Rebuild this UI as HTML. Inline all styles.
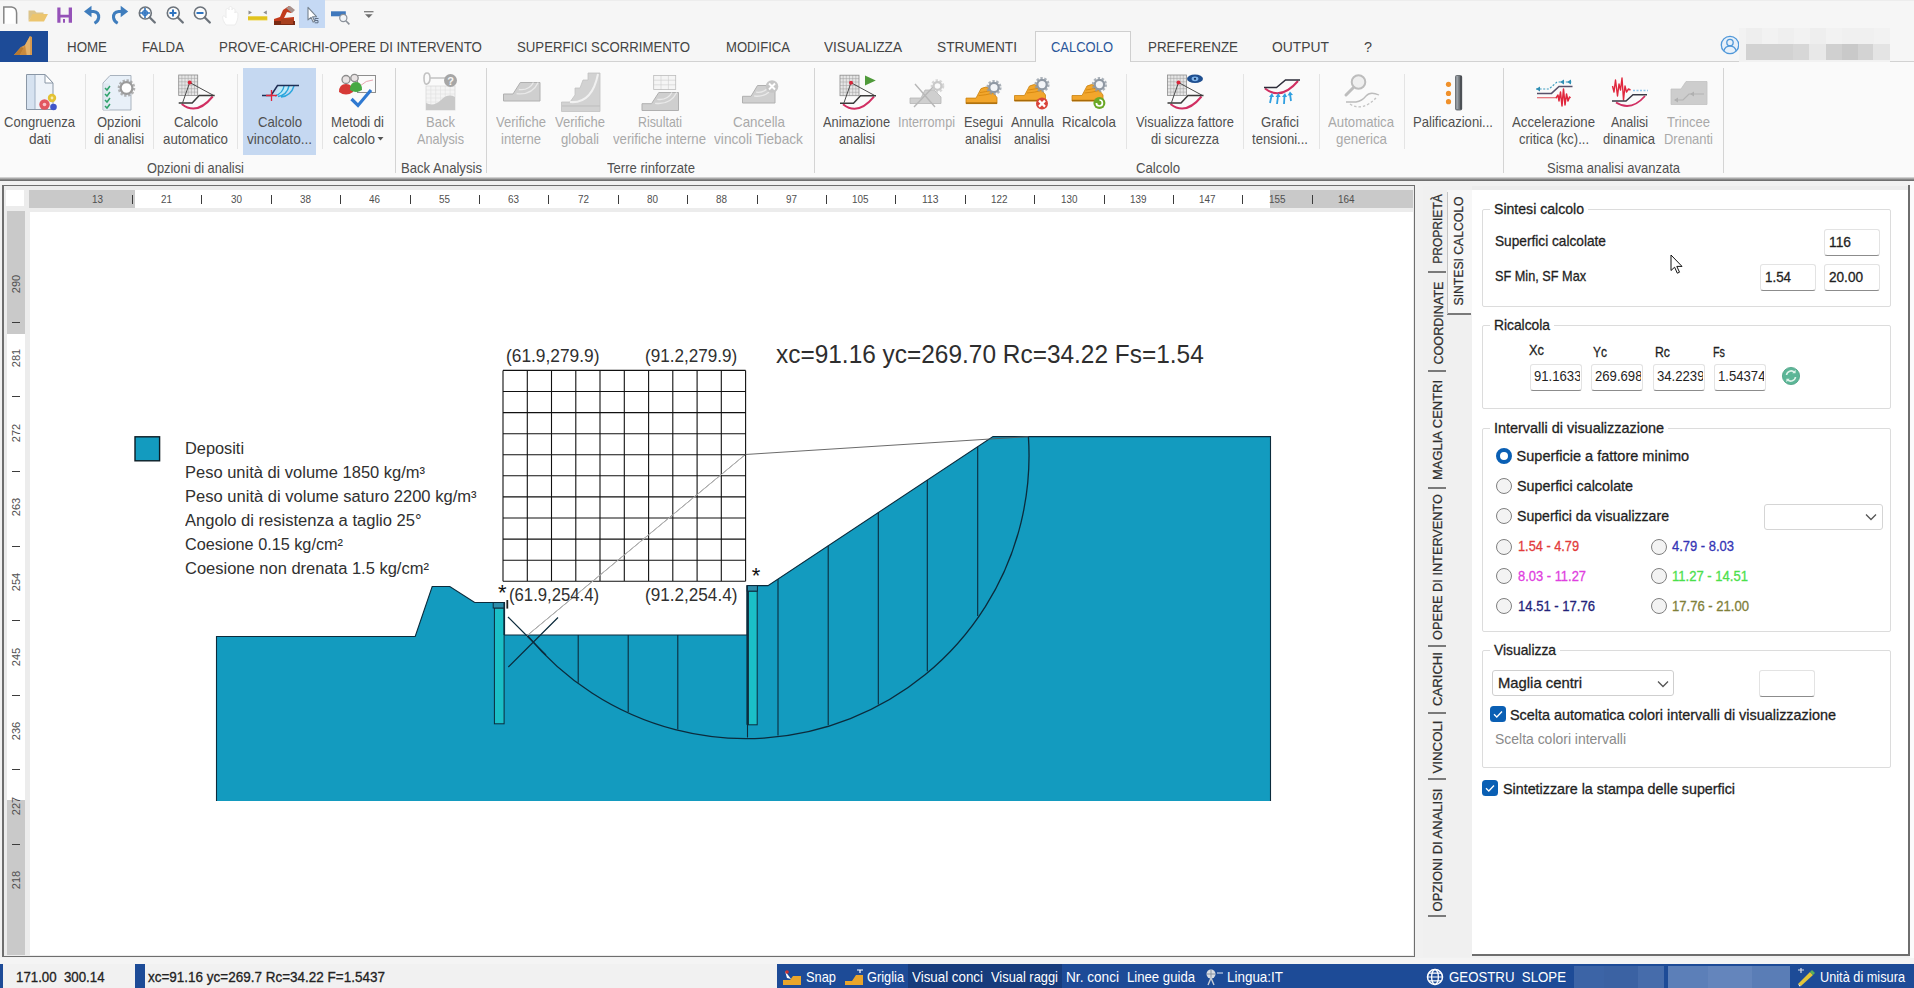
<!DOCTYPE html>
<html lang="it"><head><meta charset="utf-8"><title>GEOSTRU SLOPE</title>
<style>
*{box-sizing:border-box;margin:0;padding:0}
html,body{width:1914px;height:988px;overflow:hidden;background:#f1f1f1;font-family:"Liberation Sans",sans-serif}
.a{position:absolute}
.t{position:absolute;white-space:pre;transform-origin:0 50%}
</style></head>
<body>
<div class="a" style="left:0px;top:0px;width:1914px;height:31px;background:#f6f6f6;"></div>
<div class="a" style="left:0px;top:0px;width:1914px;height:1px;background:#ededed;"></div>
<svg class="a" style="left:2px;top:4px" width="18" height="22" viewBox="0 0 18 22"><path d="M1.800 19.700V3H9.500Q14.600 3.500 14.600 9V19.700" fill="#fff" stroke="#858585" stroke-width="1.500"/></svg>
<svg class="a" style="left:27px;top:8px" width="22" height="16" viewBox="0 0 22 16"><path d="M1.500 13V2.500h6l2 2h7v2.500H6z" fill="#dcc48a"/><path d="M1.500 13.500L5.500 6h15.500l-4 7.500z" fill="#ecc56e"/></svg>
<svg class="a" style="left:56px;top:7px" width="18" height="17" viewBox="0 0 18 17"><path d="M1.300 .500h3.200v7.300h8.200V.500h3.300v15.200H1.300z" fill="#9552b8"/><rect x="4.500" y="10.500" width="8.200" height="5.500" fill="#f6f6f6"/><rect x="7" y="12" width="2" height="3.700" fill="#9552b8"/></svg>
<svg class="a" style="left:83px;top:4px" width="20" height="22" viewBox="0 0 20 22"><path d="M1 7.500L8.500 1.800V13.200z" fill="#3f7dbd"/><path d="M7.500 7.500H10.500Q16 8.200 15.700 13.500Q15.300 17.200 11.500 19.300" fill="none" stroke="#3f7dbd" stroke-width="3"/></svg>
<svg class="a" style="left:110px;top:4px" width="20" height="22" viewBox="0 0 20 22"><path d="M18.200 7.500L10.700 1.800V13.200z" fill="#3f7dbd"/><path d="M11.700 7.500H8.700Q3.200 8.200 3.500 13.500Q3.900 17.200 7.700 19.300" fill="none" stroke="#3f7dbd" stroke-width="3"/></svg>
<svg class="a" style="left:137px;top:5px" width="20" height="20" viewBox="0 0 20 20"><circle cx="8.300" cy="8" r="6" fill="#fbfbfb" stroke="#6c737b" stroke-width="1.600"/><path d="M12.800 12.500L17.800 17.500" stroke="#6c737b" stroke-width="2.300" stroke-linecap="round"/><path d="M8 3v10M3 8h10" stroke="#2f74c0" stroke-width="1.6"/><circle cx="8" cy="8" r="2.4" fill="none" stroke="#2f74c0" stroke-width="1.2"/></svg>
<svg class="a" style="left:165px;top:5px" width="20" height="20" viewBox="0 0 20 20"><circle cx="8.300" cy="8" r="6" fill="#fbfbfb" stroke="#6c737b" stroke-width="1.600"/><path d="M12.800 12.500L17.800 17.500" stroke="#6c737b" stroke-width="2.300" stroke-linecap="round"/><path d="M8 4.5v7M4.5 8h7" stroke="#2f74c0" stroke-width="2"/></svg>
<svg class="a" style="left:192px;top:5px" width="20" height="20" viewBox="0 0 20 20"><circle cx="8.300" cy="8" r="6" fill="#fbfbfb" stroke="#6c737b" stroke-width="1.600"/><path d="M12.800 12.500L17.800 17.500" stroke="#6c737b" stroke-width="2.300" stroke-linecap="round"/><path d="M4.5 8h7" stroke="#2f74c0" stroke-width="2"/></svg>
<svg class="a" style="left:221px;top:5px" width="20" height="22" viewBox="0 0 20 22"><path d="M5 20c-3-4-4-8-3-9s3 1 3 2V5c0-2 3-2 3 0V3c0-2 3-2 3 0v2c0-2 3-2 3 0v3c0-2 3-1 3 1 0 5-1 8-3 11z" fill="#fff" stroke="#ececec" stroke-width="1"/></svg>
<svg class="a" style="left:246px;top:8px" width="24" height="14" viewBox="0 0 24 14"><rect x="2" y="8.300" width="19.300" height="3.800" fill="#e2c31c"/><path d="M2 12.300h19.300" stroke="#f3e38a" stroke-width=".8"/><path d="M2.500 2.500l3.500 2-3.500 2zM20.800 2.500l-3.500 2 3.500 2z" fill="#8d8d8d"/></svg>
<svg class="a" style="left:273px;top:5px" width="24" height="21" viewBox="0 0 24 21"><path d="M1 20v-6l6-2 3-7 6-4 5 4-3 3-4-1-3 6 10-1v6z" fill="#c23a1c"/><path d="M1 20v-4h21v4z" fill="#7a2a14"/><path d="M13 3l4-2 5 4-3 3z" fill="#a8928c"/><path d="M8 14h12v5H8z" fill="#a8401f"/></svg>
<div class="a" style="left:299px;top:0px;width:26px;height:28px;background:#c5d9f4;"></div>
<svg class="a" style="left:305px;top:5px" width="16" height="21" viewBox="0 0 16 21"><path d="M3 2.300v12.600l3-2.600 2.100 4.800 1.600-.7-2.100-4.700H11.500z" fill="#fff" stroke="#76828f" stroke-width="1.100" stroke-linejoin="round"/><path d="M10 13.500h3.500M10 13.500v2h3v2.300h-3.300" fill="none" stroke="#5f6f85" stroke-width="1"/></svg>
<svg class="a" style="left:330px;top:8px" width="22" height="18" viewBox="0 0 22 18"><rect x="1" y="3.300" width="14.800" height="5" fill="#3f78bd"/><circle cx="13.300" cy="10" r="3.600" fill="#f2f5f8" stroke="#8a9099" stroke-width="1.200"/><path d="M15.800 12.800l3.600 3.600" stroke="#8a9099" stroke-width="1.600"/></svg>
<svg class="a" style="left:361px;top:9px" width="14" height="12" viewBox="0 0 14 12"><path d="M3 2.700h9.500" stroke="#7a7a7a" stroke-width="1.300"/><path d="M4 5.200h7.600L7.800 9z" fill="#6e6e6e"/></svg>
<div class="a" style="left:0px;top:31px;width:1914px;height:31px;background:#f6f6f6;"></div>
<div class="a" style="left:0px;top:61px;width:1914px;height:1px;background:#d2d2d2;"></div>
<div class="a" style="left:0px;top:31px;width:48px;height:31px;background:#1d4b97;"></div>
<svg class="a" style="left:12px;top:35px" width="23" height="22" viewBox="0 0 23 22"><path d="M2 20L9 12l4-2 5-9 2 1v18z" fill="#d89a4e"/><path d="M2 20l7-8 3 1-4 7z" fill="#b87a32"/><path d="M13 10l5-9v19h-3z" fill="#e7b873" opacity=".8"/><path d="M8 20l5-10 1 10z" fill="#c98a3e"/></svg>
<div class="a" style="left:1035px;top:31px;width:96px;height:31px;background:#fafafa;border:1px solid #cfcfcf;border-bottom:none;"></div>
<div class="t" style="left:67.0px;top:37.0px;font-size:15.5px;line-height:20px;color:#444;transform:scaleX(0.860);">HOME</div>
<div class="t" style="left:142.0px;top:37.0px;font-size:15.5px;line-height:20px;color:#444;transform:scaleX(0.855);">FALDA</div>
<div class="t" style="left:219.0px;top:37.0px;font-size:15.5px;line-height:20px;color:#444;transform:scaleX(0.859);">PROVE-CARICHI-OPERE DI INTERVENTO</div>
<div class="t" style="left:517.0px;top:37.0px;font-size:15.5px;line-height:20px;color:#444;transform:scaleX(0.852);">SUPERFICI SCORRIMENTO</div>
<div class="t" style="left:726.0px;top:37.0px;font-size:15.5px;line-height:20px;color:#444;transform:scaleX(0.845);">MODIFICA</div>
<div class="t" style="left:824.0px;top:37.0px;font-size:15.5px;line-height:20px;color:#444;transform:scaleX(0.879);">VISUALIZZA</div>
<div class="t" style="left:937.0px;top:37.0px;font-size:15.5px;line-height:20px;color:#444;transform:scaleX(0.885);">STRUMENTI</div>
<div class="t" style="left:1051.0px;top:37.0px;font-size:15.5px;line-height:20px;color:#2b579a;transform:scaleX(0.837);">CALCOLO</div>
<div class="t" style="left:1148.0px;top:37.0px;font-size:15.5px;line-height:20px;color:#444;transform:scaleX(0.864);">PREFERENZE</div>
<div class="t" style="left:1272.0px;top:37.0px;font-size:15.5px;line-height:20px;color:#444;transform:scaleX(0.895);">OUTPUT</div>
<div class="t" style="left:1364.0px;top:37.0px;font-size:15.5px;line-height:20px;color:#444;transform:scaleX(0.928);">?</div>
<svg class="a" style="left:1718.6px;top:34.2px" width="22" height="22" viewBox="0 0 22 22"><circle cx="11" cy="11" r="9.500" fill="#e7f0f9"/><circle cx="11" cy="11" r="8.700" fill="none" stroke="#4f97d8" stroke-width="1.300"/><circle cx="11" cy="8.500" r="3.200" fill="none" stroke="#4f97d8" stroke-width="1.300"/><path d="M4.800 17c1-3.800 3.500-4.800 6.200-4.800s5.200 1 6.200 4.800" fill="none" stroke="#4f97d8" stroke-width="1.300"/></svg>
<div class="a" style="left:1739px;top:28px;width:151px;height:34px;background:#f2f2f2;"></div>
<div class="a" style="left:1746px;top:28px;width:16px;height:16px;background:#eeeeee;"></div>
<div class="a" style="left:1778px;top:28px;width:16px;height:16px;background:#efefef;"></div>
<div class="a" style="left:1810px;top:28px;width:16px;height:16px;background:#eeeeee;"></div>
<div class="a" style="left:1842px;top:28px;width:32px;height:16px;background:#f0f0f0;"></div>
<div class="a" style="left:1746px;top:44px;width:47px;height:16px;background:#d2d2d2;"></div>
<div class="a" style="left:1793px;top:44px;width:16px;height:16px;background:#d7d7d7;"></div>
<div class="a" style="left:1809px;top:44px;width:17px;height:16px;background:#e8e8e8;"></div>
<div class="a" style="left:1826px;top:44px;width:16px;height:16px;background:#d0d0d0;"></div>
<div class="a" style="left:1842px;top:44px;width:16px;height:16px;background:#c9c9c9;"></div>
<div class="a" style="left:1858px;top:44px;width:15px;height:16px;background:#d3d3d3;"></div>
<div class="a" style="left:1873px;top:44px;width:17px;height:16px;background:#e4e4e4;"></div>
<div class="a" style="left:0px;top:62px;width:1914px;height:118px;background:#fafafa;"></div>
<div class="a" style="left:0px;top:177px;width:1914px;height:4px;background:linear-gradient(#e4e4e4,#b4b4b4 30%,#7c7c7c 70%,#666);"></div>
<div class="a" style="left:0px;top:181px;width:1914px;height:4px;background:#f1f1f1;"></div>
<div class="a" style="left:243px;top:68px;width:73px;height:87px;background:#c5d8f1;"></div>
<div class="a" style="left:85px;top:74px;width:1px;height:75px;background:#e4e4e4;"></div>
<div class="a" style="left:153px;top:74px;width:1px;height:75px;background:#e4e4e4;"></div>
<div class="a" style="left:237px;top:74px;width:1px;height:75px;background:#e4e4e4;"></div>
<div class="a" style="left:322px;top:74px;width:1px;height:75px;background:#e4e4e4;"></div>
<div class="a" style="left:1126px;top:74px;width:1px;height:75px;background:#e4e4e4;"></div>
<div class="a" style="left:1243px;top:74px;width:1px;height:75px;background:#e4e4e4;"></div>
<div class="a" style="left:1319px;top:74px;width:1px;height:75px;background:#e4e4e4;"></div>
<div class="a" style="left:1404px;top:74px;width:1px;height:75px;background:#e4e4e4;"></div>
<div class="a" style="left:395px;top:68px;width:1px;height:105px;background:#d4d4d4;"></div>
<div class="a" style="left:486px;top:68px;width:1px;height:105px;background:#d4d4d4;"></div>
<div class="a" style="left:814px;top:68px;width:1px;height:105px;background:#d4d4d4;"></div>
<div class="a" style="left:1503px;top:68px;width:1px;height:105px;background:#d4d4d4;"></div>
<div class="a" style="left:1723px;top:68px;width:1px;height:105px;background:#d4d4d4;"></div>
<div class="t" style="left:4.0px;top:112.2px;font-size:15px;line-height:20px;color:#505050;transform:scaleX(0.869);">Congruenza</div>
<div class="t" style="left:28.5px;top:128.7px;font-size:15px;line-height:20px;color:#505050;transform:scaleX(0.910);">dati</div>
<div class="t" style="left:97.0px;top:112.2px;font-size:15px;line-height:20px;color:#505050;transform:scaleX(0.865);">Opzioni</div>
<div class="t" style="left:94.0px;top:128.7px;font-size:15px;line-height:20px;color:#505050;transform:scaleX(0.857);">di analisi</div>
<div class="t" style="left:173.5px;top:112.2px;font-size:15px;line-height:20px;color:#505050;transform:scaleX(0.880);">Calcolo</div>
<div class="t" style="left:163.0px;top:128.7px;font-size:15px;line-height:20px;color:#505050;transform:scaleX(0.886);">automatico</div>
<div class="t" style="left:257.5px;top:112.2px;font-size:15px;line-height:20px;color:#505050;transform:scaleX(0.880);">Calcolo</div>
<div class="t" style="left:247.0px;top:128.7px;font-size:15px;line-height:20px;color:#505050;transform:scaleX(0.907);">vincolato...</div>
<div class="t" style="left:331.0px;top:112.2px;font-size:15px;line-height:20px;color:#505050;transform:scaleX(0.871);">Metodi di</div>
<div class="t" style="left:332.5px;top:128.7px;font-size:15px;line-height:20px;color:#505050;transform:scaleX(0.900);">calcolo</div>
<div class="t" style="left:426.0px;top:112.2px;font-size:15px;line-height:20px;color:#a9a9a9;transform:scaleX(0.870);">Back</div>
<div class="t" style="left:417.0px;top:128.7px;font-size:15px;line-height:20px;color:#a9a9a9;transform:scaleX(0.841);">Analysis</div>
<div class="t" style="left:496.0px;top:112.2px;font-size:15px;line-height:20px;color:#a9a9a9;transform:scaleX(0.869);">Verifiche</div>
<div class="t" style="left:501.0px;top:128.7px;font-size:15px;line-height:20px;color:#a9a9a9;transform:scaleX(0.872);">interne</div>
<div class="t" style="left:555.0px;top:112.2px;font-size:15px;line-height:20px;color:#a9a9a9;transform:scaleX(0.869);">Verifiche</div>
<div class="t" style="left:561.0px;top:128.7px;font-size:15px;line-height:20px;color:#a9a9a9;transform:scaleX(0.876);">globali</div>
<div class="t" style="left:637.5px;top:112.2px;font-size:15px;line-height:20px;color:#a9a9a9;transform:scaleX(0.825);">Risultati</div>
<div class="t" style="left:613.0px;top:128.7px;font-size:15px;line-height:20px;color:#a9a9a9;transform:scaleX(0.878);">verifiche interne</div>
<div class="t" style="left:732.5px;top:112.2px;font-size:15px;line-height:20px;color:#a9a9a9;transform:scaleX(0.891);">Cancella</div>
<div class="t" style="left:714.0px;top:128.7px;font-size:15px;line-height:20px;color:#a9a9a9;transform:scaleX(0.912);">vincoli Tieback</div>
<div class="t" style="left:823.0px;top:112.2px;font-size:15px;line-height:20px;color:#505050;transform:scaleX(0.855);">Animazione</div>
<div class="t" style="left:838.5px;top:128.7px;font-size:15px;line-height:20px;color:#505050;transform:scaleX(0.847);">analisi</div>
<div class="t" style="left:898.0px;top:112.2px;font-size:15px;line-height:20px;color:#a9a9a9;transform:scaleX(0.844);">Interrompi</div>
<div class="t" style="left:963.5px;top:112.2px;font-size:15px;line-height:20px;color:#505050;transform:scaleX(0.850);">Esegui</div>
<div class="t" style="left:965.0px;top:128.7px;font-size:15px;line-height:20px;color:#505050;transform:scaleX(0.847);">analisi</div>
<div class="t" style="left:1010.5px;top:112.2px;font-size:15px;line-height:20px;color:#505050;transform:scaleX(0.859);">Annulla</div>
<div class="t" style="left:1014.0px;top:128.7px;font-size:15px;line-height:20px;color:#505050;transform:scaleX(0.847);">analisi</div>
<div class="t" style="left:1062.0px;top:112.2px;font-size:15px;line-height:20px;color:#505050;transform:scaleX(0.887);">Ricalcola</div>
<div class="t" style="left:1135.5px;top:112.2px;font-size:15px;line-height:20px;color:#505050;transform:scaleX(0.860);">Visualizza fattore</div>
<div class="t" style="left:1150.5px;top:128.7px;font-size:15px;line-height:20px;color:#505050;transform:scaleX(0.859);">di sicurezza</div>
<div class="t" style="left:1261.0px;top:112.2px;font-size:15px;line-height:20px;color:#505050;transform:scaleX(0.877);">Grafici</div>
<div class="t" style="left:1252.0px;top:128.7px;font-size:15px;line-height:20px;color:#505050;transform:scaleX(0.872);">tensioni...</div>
<div class="t" style="left:1328.0px;top:112.2px;font-size:15px;line-height:20px;color:#a9a9a9;transform:scaleX(0.880);">Automatica</div>
<div class="t" style="left:1335.5px;top:128.7px;font-size:15px;line-height:20px;color:#a9a9a9;transform:scaleX(0.886);">generica</div>
<div class="t" style="left:1413.0px;top:112.2px;font-size:15px;line-height:20px;color:#505050;transform:scaleX(0.872);">Palificazioni...</div>
<div class="t" style="left:1512.0px;top:112.2px;font-size:15px;line-height:20px;color:#505050;transform:scaleX(0.881);">Accelerazione</div>
<div class="t" style="left:1518.5px;top:128.7px;font-size:15px;line-height:20px;color:#505050;transform:scaleX(0.866);">critica (kc)...</div>
<div class="t" style="left:1610.5px;top:112.2px;font-size:15px;line-height:20px;color:#505050;transform:scaleX(0.837);">Analisi</div>
<div class="t" style="left:1603.0px;top:128.7px;font-size:15px;line-height:20px;color:#505050;transform:scaleX(0.866);">dinamica</div>
<div class="t" style="left:1667.0px;top:112.2px;font-size:15px;line-height:20px;color:#a9a9a9;transform:scaleX(0.869);">Trincee</div>
<div class="t" style="left:1664.0px;top:128.7px;font-size:15px;line-height:20px;color:#a9a9a9;transform:scaleX(0.864);">Drenanti</div>
<svg class="a" style="left:377px;top:136px" width="8" height="6"><path d="M0.5 1h6L3.5 4.5z" fill="#555"/></svg>
<div class="t" style="left:147.0px;top:157.6px;font-size:15px;line-height:20px;color:#505050;transform:scaleX(0.855);">Opzioni di analisi</div>
<div class="t" style="left:401.0px;top:157.6px;font-size:15px;line-height:20px;color:#505050;transform:scaleX(0.875);">Back Analysis</div>
<div class="t" style="left:607.0px;top:157.6px;font-size:15px;line-height:20px;color:#505050;transform:scaleX(0.872);">Terre rinforzate</div>
<div class="t" style="left:1136.0px;top:157.6px;font-size:15px;line-height:20px;color:#505050;transform:scaleX(0.880);">Calcolo</div>
<div class="t" style="left:1547.0px;top:157.6px;font-size:15px;line-height:20px;color:#505050;transform:scaleX(0.867);">Sisma analisi avanzata</div>
<svg class="a" style="left:0;top:62px" width="1914" height="118" viewBox="0 62 1914 118">
<path d="M26.5 74.5H45L53 83V109.5H26.5z" fill="#eef3f9" stroke="#8a97a6" stroke-width="1"/><path d="M27 75H35V109H27z" fill="#d6e2f0"/><path d="M35 75V109" stroke="#9fb0c4" stroke-width="1"/><path d="M45 74.5V83H53z" fill="#fff" stroke="#8a97a6" stroke-width="1"/><circle cx="44.5" cy="104.5" r="5.2" fill="#e2575f"/><circle cx="44.5" cy="104.5" r="1.8" fill="#f7c5c8"/><circle cx="52" cy="98" r="4.2" fill="#e3c233"/><circle cx="52" cy="98" r="1.4" fill="#f7ecb0"/><circle cx="53.5" cy="107" r="3.3" fill="#3f55c9"/>
<path d="M110 75.5H131V110H103V83z" fill="#e8f0f8" stroke="#a9b3be" stroke-width="1"/><path d="M103.5 83.5H109.5V110H103.5z" fill="#dfe8f1"/><path d="M105 88l2 2 3-4M105 94l2 2 3-4M105 100l2 2 3-4M105 106l2 2 3-4" stroke="#2fa36b" stroke-width="1.5" fill="none"/>
<circle cx="126.5" cy="88" r="7.5" fill="none" stroke="#9b9b9b" stroke-width="2.6" stroke-dasharray="2.3 1.6" opacity=".75"/><circle cx="126.5" cy="88" r="5.9" fill="#ffffff" stroke="#9b9b9b" stroke-width="2.2"/>
<rect x="178.7" y="75" width="19.0" height="20.5" fill="#e6e6e6" stroke="#8c8c8c" stroke-width=".8"/><path d="M181.9 75V95.5M178.7 78.4H197.7M185.0 75V95.5M178.7 81.8H197.7M188.2 75V95.5M178.7 85.2H197.7M191.4 75V95.5M178.7 88.7H197.7M194.5 75V95.5M178.7 92.1H197.7" stroke="#8c8c8c" stroke-width=".5" opacity=".8"/><path d="M189.7 82.5L182.7 102.5M189.7 82.5L213.7 95.5" stroke="#4a4a4a" stroke-width="1" fill="none"/><path d="M181.7 104Q196.7 116 212.7 96.5" stroke="#d12f62" stroke-width="2" fill="none"/><path d="M178.7 103H192.2L199.2 95.5H214.7" stroke="#3a3a3a" stroke-width="1.5" fill="none"/><circle cx="189.7" cy="82.5" r="2" fill="#d9263a"/>
<path d="M279 86Q278 94 272 96Q282 98 294 86z" fill="#bfe9f7"/><path d="M284 86Q283 93 275 96M289 86Q287 95 278 96.5M294 86Q291 96 281 97" stroke="#2aa6dd" stroke-width="1.4" fill="none"/><path d="M262 95.5H271L277.5 85.5H299" stroke="#1f2f55" stroke-width="1.5" fill="none"/><path d="M271.5 90V101M266 95.5H277" stroke="#e0263c" stroke-width="1.3"/>
<rect x="357.5" y="75.5" width="18" height="17" fill="#fbfbfb" stroke="#8e8e8e" stroke-width="1"/><path d="M360 86Q366 80 373 80" stroke="#e7a7b2" stroke-width="1" fill="none"/><circle cx="346" cy="79.5" r="4" fill="#e8e3e3" stroke="#8c8c8c" stroke-width="1.3"/><circle cx="354.5" cy="78" r="3.7" fill="#e8e3e3" stroke="#8c8c8c" stroke-width="1.3"/><path d="M339 92Q339 84 346 84Q353 84 353 92Q346 97 339 92z" fill="#d63a36"/><path d="M350 90Q350 82 356 82Q362 82 362 90Q356 94 350 90z" fill="#46a944"/><path d="M351.5 99L358 105.5L371 90" stroke="#2f79d1" stroke-width="3.2" fill="none"/>
<rect x="426" y="86" width="29" height="24" fill="#f4f4f4" stroke="#d9d9d9" stroke-width=".8"/><path d="M430.8 86V110M426 90.0H455M435.7 86V110M426 94.0H455M440.5 86V110M426 98.0H455M445.3 86V110M426 102.0H455M450.2 86V110M426 106.0H455" stroke="#d9d9d9" stroke-width=".5" opacity=".8"/>
<path d="M426 110V103Q434 107 441 100T455 97V110z" fill="#c9c9c9"/><path d="M424 78Q424 73 427 73T430 78T427 84T424 78zM430 78H446" stroke="#c2c2c2" stroke-width="1.6" fill="none"/><circle cx="450.500" cy="80.500" r="6.500" fill="#a6a6a6"/><text x="450.500" y="84.500" text-anchor="middle" font-size="11" font-weight="700" fill="#f4f4f4" font-family="Liberation Sans,sans-serif">?</text>
<path d="M503.5 101V94.0H513.0L520.3 82.5H540.0V101z" fill="#cfcfcf" stroke="#b0b0b0" stroke-width="1"/><path d="M518.8 89.5Q529.0 90.8 533.4 82.5M516.6 93.6Q532.0 95.5 538.2 82.5" stroke="#e9e9e9" stroke-width="1.3" fill="none"/>
<path d="M561.5 111.5V102H570L575 95V88H580L583 80H588V73H600V111.5z" fill="#d2d2d2" stroke="#c2c2c2" stroke-width=".8"/><path d="M570 102Q592 104 598 74" stroke="#f1f1f1" stroke-width="2" fill="none"/><path d="M562 106H600" stroke="#bdbdbd" stroke-width="1"/>
<rect x="653.7" y="75.5" width="22.0" height="14.0" fill="#f5f5f5" stroke="#bcbcbc" stroke-width=".8"/><path d="M661.0 75.5V89.5M653.7 80.2H675.7M668.4 75.5V89.5M653.7 84.8H675.7" stroke="#bcbcbc" stroke-width=".5" opacity=".8"/>
<path d="M642 110.5V103.7H651.5L658.8 92.5H678.5V110.5z" fill="#cfcfcf" stroke="#b0b0b0" stroke-width="1"/><path d="M657.3 99.3Q667.5 100.6 671.9 92.5M655.1 103.3Q670.5 105.1 676.7 92.5" stroke="#e9e9e9" stroke-width="1.3" fill="none"/>
<path d="M742.5 103V96.3H751.0L757.5 85.5H775.0V103z" fill="#cfcfcf" stroke="#b0b0b0" stroke-width="1"/><path d="M756.1 92.2Q765.2 93.4 769.1 85.5M754.2 96.0Q767.9 97.8 773.4 85.5" stroke="#e9e9e9" stroke-width="1.3" fill="none"/>
<circle cx="772" cy="86.5" r="6.3" fill="#c6c6c6"/><path d="M769 83.5l6 6M775 83.5l-6 6" stroke="#fff" stroke-width="2"/>
<rect x="840" y="75.2" width="19" height="20.5" fill="#e6e6e6" stroke="#8c8c8c" stroke-width=".8"/><path d="M843.2 75.2V95.7M840 78.6H859M846.3 75.2V95.7M840 82.0H859M849.5 75.2V95.7M840 85.5H859M852.7 75.2V95.7M840 88.9H859M855.8 75.2V95.7M840 92.3H859" stroke="#8c8c8c" stroke-width=".5" opacity=".8"/><path d="M851 82.7L844 102.7M851 82.7L875 95.7" stroke="#4a4a4a" stroke-width="1" fill="none"/><path d="M843 104.2Q858 116.2 874 96.7" stroke="#d12f62" stroke-width="2" fill="none"/><path d="M840 103.2H853.5L860.5 95.7H876" stroke="#3a3a3a" stroke-width="1.5" fill="none"/><circle cx="851" cy="82.7" r="2" fill="#d9263a"/>
<path d="M865 75.5V85.5L875.8 80.5z" fill="#4f9a3a"/>
<path d="M910 103.5V98H921L925 90H934L941 97V103.5z" fill="#cfcfcf" stroke="#b5b5b5" stroke-width=".8"/><path d="M915 84L935 107M936 84L914 107" stroke="#b7b7b7" stroke-width="1.4"/>
<circle cx="937.5" cy="86" r="5.5" fill="none" stroke="#c9c9c9" stroke-width="2.6" stroke-dasharray="2.3 1.6" opacity=".75"/><circle cx="937.5" cy="86" r="3.9" fill="#fafafa" stroke="#c9c9c9" stroke-width="2.2"/>
<path d="M966 103.6V98.1H976L981 88.6Q986 85.6 990 88.6L997 97.6V103.6z" fill="#f2a62c" stroke="#c9820f" stroke-width=".8"/><path d="M966 103.1H997" stroke="#a86a08" stroke-width="1.4"/><path d="M980 92.6Q986 91.6 991 90.6M978.5 95.6Q986 95.1 993 93.1" stroke="#d98a12" stroke-width="1" fill="none"/>
<circle cx="994" cy="87.5" r="6.3" fill="none" stroke="#8f98a3" stroke-width="2.6" stroke-dasharray="2.3 1.6" opacity=".75"/><circle cx="994" cy="87.5" r="4.699999999999999" fill="#f2f4f7" stroke="#8f98a3" stroke-width="2.2"/>
<path d="M1014.5 101V95.5H1024.5L1029.5 86Q1034.5 83 1038.5 86L1045.5 95V101z" fill="#f2a62c" stroke="#c9820f" stroke-width=".8"/><path d="M1014.5 100.5H1045.5" stroke="#a86a08" stroke-width="1.4"/><path d="M1028.5 90Q1034.5 89 1039.5 88M1027.0 93Q1034.5 92.5 1041.5 90.5" stroke="#d98a12" stroke-width="1" fill="none"/>
<circle cx="1042" cy="84.6" r="6.3" fill="none" stroke="#8f98a3" stroke-width="2.6" stroke-dasharray="2.3 1.6" opacity=".75"/><circle cx="1042" cy="84.6" r="4.699999999999999" fill="#f2f4f7" stroke="#8f98a3" stroke-width="2.2"/>
<circle cx="1042" cy="103.6" r="6" fill="#d9453b"/><path d="M1039 100.6l6 6M1045 100.6l-6 6" stroke="#fff" stroke-width="2.2"/>
<path d="M1072 101V95.5H1082L1087 86Q1092 83 1096 86L1103 95V101z" fill="#f2a62c" stroke="#c9820f" stroke-width=".8"/><path d="M1072 100.5H1103" stroke="#a86a08" stroke-width="1.4"/><path d="M1086 90Q1092 89 1097 88M1084.5 93Q1092 92.5 1099 90.5" stroke="#d98a12" stroke-width="1" fill="none"/>
<circle cx="1099.4" cy="84.6" r="6.3" fill="none" stroke="#8f98a3" stroke-width="2.6" stroke-dasharray="2.3 1.6" opacity=".75"/><circle cx="1099.4" cy="84.6" r="4.699999999999999" fill="#f2f4f7" stroke="#8f98a3" stroke-width="2.2"/>
<circle cx="1099.4" cy="103" r="6" fill="#6aa826"/><path d="M1096.4 103a3 3 0 1 0 3-3" stroke="#fff" stroke-width="1.7" fill="none"/>
<rect x="1167.5" y="75" width="19.0" height="20.5" fill="#e6e6e6" stroke="#8c8c8c" stroke-width=".8"/><path d="M1170.7 75V95.5M1167.5 78.4H1186.5M1173.8 75V95.5M1167.5 81.8H1186.5M1177.0 75V95.5M1167.5 85.2H1186.5M1180.2 75V95.5M1167.5 88.7H1186.5M1183.3 75V95.5M1167.5 92.1H1186.5" stroke="#8c8c8c" stroke-width=".5" opacity=".8"/><path d="M1178.5 82.5L1171.5 102.5M1178.5 82.5L1202.5 95.5" stroke="#4a4a4a" stroke-width="1" fill="none"/><path d="M1170.5 104Q1185.5 116 1201.5 96.5" stroke="#d12f62" stroke-width="2" fill="none"/><path d="M1167.5 103H1181.0L1188.0 95.5H1203.5" stroke="#3a3a3a" stroke-width="1.5" fill="none"/><circle cx="1178.5" cy="82.5" r="2" fill="#d9263a"/>
<ellipse cx="1195" cy="78.8" rx="8" ry="4.3" fill="#1f4f90"/><ellipse cx="1195" cy="78.8" rx="3.4" ry="2.4" fill="#7fb4ea"/><circle cx="1195" cy="78.8" r="1.1" fill="#12305c"/>
<path d="M1265 88.5Q1281 101 1298 81" stroke="#d12f62" stroke-width="2" fill="none"/><path d="M1264 87.6H1276.5L1285.5 80H1300" stroke="#2d2d3a" stroke-width="1.5" fill="none"/><path d="M1270 103l1.5-7M1277 104l1-8M1284 104l.5-8M1291 101l-1-7" stroke="#2f9fe0" stroke-width="1.8"/><path d="M1269 97l3-4 2 4zM1275.5 97l3-4 2 4zM1282 97l3-4 2 4zM1287.5 95.5l2.5-4 3 3.5z" fill="#2f9fe0"/>
<circle cx="1358.5" cy="82" r="6.8" fill="#efefef" stroke="#bdbdbd" stroke-width="2"/><path d="M1353.5 87.5L1346 95" stroke="#bdbdbd" stroke-width="3" stroke-linecap="round"/><path d="M1346 102H1356Q1362 101 1366 96T1379 95" stroke="#bcbcbc" stroke-width="1.3" fill="none"/><path d="M1350 104Q1362 112 1376 98" stroke="#c4c4c4" stroke-width="1.4" stroke-dasharray="2.5 2" fill="none"/>
<rect x="1455" y="75" width="7.2" height="35.5" rx="2" fill="#6e7378"/><rect x="1456.2" y="76" width="2.2" height="33" fill="#9aa0a6"/><rect x="1460" y="76" width="2" height="33.5" fill="#4c5055"/><circle cx="1448.5" cy="84.3" r="2.6" fill="#f0902a"/><circle cx="1448.5" cy="93.4" r="2.6" fill="#f0902a"/><circle cx="1448.5" cy="101.7" r="2.6" fill="#f0902a"/>
<path d="M1536 89H1549L1557 82H1572" stroke="#3a9cc0" stroke-width="1.2" stroke-dasharray="2 1.6" fill="none"/><path d="M1536 89l4-2.5v5zM1560 82l4-2.5v5zM1567 82l4-2.5v5z" fill="#2f8fb5"/><path d="M1537 93.4H1551.5L1559 86.5H1572.5" stroke="#57506a" stroke-width="1.5" fill="none"/><path d="M1537 97.7H1557" stroke="#e46a74" stroke-width="1.2"/><path d="M1556 98l2-3 1 6 1.5-9 1.5 14 1.5-17 1.500 16 1.5-11 1.500 7 1.5-4 1 1" stroke="#e0263c" stroke-width="1.5" fill="none" stroke-linejoin="round"/>
<path d="M1633 90.500H1648" stroke="#8ec5ec" stroke-width="1.4" stroke-dasharray="2 1.500"/><path d="M1612.5 86l1.500 6 1.500-12 2 16 1.500-12 1.500 6 1.500-12 1.500 22 1.500-14 1.500 6 2-3 2 1" stroke="#e0263c" stroke-width="1.4" fill="none" stroke-linejoin="round"/><path d="M1616 102.5Q1631 112 1645 96" stroke="#d12f62" stroke-width="1.8" fill="none"/><path d="M1612 101H1626L1633 94.800H1647" stroke="#3a3a45" stroke-width="1.5" fill="none"/>
<path d="M1671 104.500V89H1681L1686 81.500H1707V104.500z" fill="#cdcdcd" stroke="#c1c1c1" stroke-width=".8"/><path d="M1675 100H1683L1689 94H1704" stroke="#b4b4b4" stroke-width="1.2" fill="none"/><path d="M1674 100l4-2.500v5zM1690 94l4-2.500v5z" fill="#b0b0b0"/>
</svg>
<div class="a" style="left:2px;top:185px;width:1413px;height:772px;background:#ececec;border:1px solid #6e6e6e;border-left:2px solid #6e6e6e;"></div>
<div class="a" style="left:30px;top:212px;width:1383px;height:743px;background:#fff;"></div>
<div class="a" style="left:6px;top:190px;width:18px;height:16px;background:#fff;"></div>
<div class="a" style="left:29px;top:190px;width:1384px;height:18px;background:#fff;"></div>
<div class="a" style="left:29px;top:190px;width:106px;height:18px;background:#c9c9c9;"></div>
<div class="a" style="left:1270px;top:190px;width:143px;height:18px;background:#c9c9c9;"></div>
<div class="a" style="left:7px;top:211px;width:18px;height:744px;background:#fff;"></div>
<div class="a" style="left:7px;top:211px;width:18px;height:123px;background:#c9c9c9;"></div>
<div class="a" style="left:7px;top:800px;width:18px;height:155px;background:#c9c9c9;"></div>
<div class="t" style="left:91.7px;top:191.5px;font-size:11px;line-height:14px;color:#4f4f4f;transform:scaleX(0.899);">13</div>
<div class="a" style="left:132px;top:195px;width:1px;height:9px;background:#3c3c3c;"></div>
<div class="t" style="left:161.1px;top:191.5px;font-size:11px;line-height:14px;color:#4f4f4f;transform:scaleX(0.899);">21</div>
<div class="a" style="left:201px;top:195px;width:1px;height:9px;background:#3c3c3c;"></div>
<div class="t" style="left:230.5px;top:191.5px;font-size:11px;line-height:14px;color:#4f4f4f;transform:scaleX(0.899);">30</div>
<div class="a" style="left:271px;top:195px;width:1px;height:9px;background:#3c3c3c;"></div>
<div class="t" style="left:299.9px;top:191.5px;font-size:11px;line-height:14px;color:#4f4f4f;transform:scaleX(0.899);">38</div>
<div class="a" style="left:340px;top:195px;width:1px;height:9px;background:#3c3c3c;"></div>
<div class="t" style="left:369.3px;top:191.5px;font-size:11px;line-height:14px;color:#4f4f4f;transform:scaleX(0.899);">46</div>
<div class="a" style="left:410px;top:195px;width:1px;height:9px;background:#3c3c3c;"></div>
<div class="t" style="left:438.7px;top:191.5px;font-size:11px;line-height:14px;color:#4f4f4f;transform:scaleX(0.899);">55</div>
<div class="a" style="left:479px;top:195px;width:1px;height:9px;background:#3c3c3c;"></div>
<div class="t" style="left:508.1px;top:191.5px;font-size:11px;line-height:14px;color:#4f4f4f;transform:scaleX(0.899);">63</div>
<div class="a" style="left:548px;top:195px;width:1px;height:9px;background:#3c3c3c;"></div>
<div class="t" style="left:577.5px;top:191.5px;font-size:11px;line-height:14px;color:#4f4f4f;transform:scaleX(0.899);">72</div>
<div class="a" style="left:618px;top:195px;width:1px;height:9px;background:#3c3c3c;"></div>
<div class="t" style="left:646.9px;top:191.5px;font-size:11px;line-height:14px;color:#4f4f4f;transform:scaleX(0.899);">80</div>
<div class="a" style="left:687px;top:195px;width:1px;height:9px;background:#3c3c3c;"></div>
<div class="t" style="left:716.3px;top:191.5px;font-size:11px;line-height:14px;color:#4f4f4f;transform:scaleX(0.899);">88</div>
<div class="a" style="left:757px;top:195px;width:1px;height:9px;background:#3c3c3c;"></div>
<div class="t" style="left:785.7px;top:191.5px;font-size:11px;line-height:14px;color:#4f4f4f;transform:scaleX(0.899);">97</div>
<div class="a" style="left:826px;top:195px;width:1px;height:9px;background:#3c3c3c;"></div>
<div class="t" style="left:852.4px;top:191.5px;font-size:11px;line-height:14px;color:#4f4f4f;transform:scaleX(0.899);">105</div>
<div class="a" style="left:895px;top:195px;width:1px;height:9px;background:#3c3c3c;"></div>
<div class="t" style="left:921.8px;top:191.5px;font-size:11px;line-height:14px;color:#4f4f4f;transform:scaleX(0.941);">113</div>
<div class="a" style="left:965px;top:195px;width:1px;height:9px;background:#3c3c3c;"></div>
<div class="t" style="left:991.2px;top:191.5px;font-size:11px;line-height:14px;color:#4f4f4f;transform:scaleX(0.899);">122</div>
<div class="a" style="left:1034px;top:195px;width:1px;height:9px;background:#3c3c3c;"></div>
<div class="t" style="left:1060.6px;top:191.5px;font-size:11px;line-height:14px;color:#4f4f4f;transform:scaleX(0.899);">130</div>
<div class="a" style="left:1104px;top:195px;width:1px;height:9px;background:#3c3c3c;"></div>
<div class="t" style="left:1130.0px;top:191.5px;font-size:11px;line-height:14px;color:#4f4f4f;transform:scaleX(0.899);">139</div>
<div class="a" style="left:1173px;top:195px;width:1px;height:9px;background:#3c3c3c;"></div>
<div class="t" style="left:1199.4px;top:191.5px;font-size:11px;line-height:14px;color:#4f4f4f;transform:scaleX(0.899);">147</div>
<div class="a" style="left:1242px;top:195px;width:1px;height:9px;background:#3c3c3c;"></div>
<div class="t" style="left:1268.8px;top:191.5px;font-size:11px;line-height:14px;color:#4f4f4f;transform:scaleX(0.899);">155</div>
<div class="a" style="left:1312px;top:195px;width:1px;height:9px;background:#3c3c3c;"></div>
<div class="t" style="left:1338.2px;top:191.5px;font-size:11px;line-height:14px;color:#4f4f4f;transform:scaleX(0.899);">164</div>
<div class="t" style="left:-4px;top:276.6px;width:40px;height:14px;line-height:14px;font-size:11px;color:#4f4f4f;text-align:center;transform-origin:50% 50%;transform:rotate(-90deg);">290</div>
<div class="a" style="left:12px;top:322px;width:8px;height:1px;background:#3c3c3c;"></div>
<div class="t" style="left:-4px;top:351.2px;width:40px;height:14px;line-height:14px;font-size:11px;color:#4f4f4f;text-align:center;transform-origin:50% 50%;transform:rotate(-90deg);">281</div>
<div class="a" style="left:12px;top:396px;width:8px;height:1px;background:#3c3c3c;"></div>
<div class="t" style="left:-4px;top:425.8px;width:40px;height:14px;line-height:14px;font-size:11px;color:#4f4f4f;text-align:center;transform-origin:50% 50%;transform:rotate(-90deg);">272</div>
<div class="a" style="left:12px;top:471px;width:8px;height:1px;background:#3c3c3c;"></div>
<div class="t" style="left:-4px;top:500.4px;width:40px;height:14px;line-height:14px;font-size:11px;color:#4f4f4f;text-align:center;transform-origin:50% 50%;transform:rotate(-90deg);">263</div>
<div class="a" style="left:12px;top:546px;width:8px;height:1px;background:#3c3c3c;"></div>
<div class="t" style="left:-4px;top:575.0px;width:40px;height:14px;line-height:14px;font-size:11px;color:#4f4f4f;text-align:center;transform-origin:50% 50%;transform:rotate(-90deg);">254</div>
<div class="a" style="left:12px;top:620px;width:8px;height:1px;background:#3c3c3c;"></div>
<div class="t" style="left:-4px;top:649.6px;width:40px;height:14px;line-height:14px;font-size:11px;color:#4f4f4f;text-align:center;transform-origin:50% 50%;transform:rotate(-90deg);">245</div>
<div class="a" style="left:12px;top:695px;width:8px;height:1px;background:#3c3c3c;"></div>
<div class="t" style="left:-4px;top:724.2px;width:40px;height:14px;line-height:14px;font-size:11px;color:#4f4f4f;text-align:center;transform-origin:50% 50%;transform:rotate(-90deg);">236</div>
<div class="a" style="left:12px;top:769px;width:8px;height:1px;background:#3c3c3c;"></div>
<div class="t" style="left:-4px;top:798.8px;width:40px;height:14px;line-height:14px;font-size:11px;color:#4f4f4f;text-align:center;transform-origin:50% 50%;transform:rotate(-90deg);">227</div>
<div class="a" style="left:12px;top:844px;width:8px;height:1px;background:#3c3c3c;"></div>
<div class="t" style="left:-4px;top:873.4px;width:40px;height:14px;line-height:14px;font-size:11px;color:#4f4f4f;text-align:center;transform-origin:50% 50%;transform:rotate(-90deg);">218</div>
<svg class="a" style="left:0;top:0" width="1914" height="988" viewBox="0 0 1914 988">
<path d="M216.5 801L216.5 636.5L415.2 636.5L432.2 586.5L449.8 586.5L474.7 602.5L504.3 602.5L504.3 635L747.2 635L747.2 585.6L768 585.6L993 436.6L1270.5 436.6L1270.5 801z" fill="#139bbf"/>
<path d="M216.5 801L216.5 636.5L415.2 636.5L432.2 586.5L449.8 586.5L474.7 602.5L504.3 602.5L504.3 635L747.2 635L747.2 585.6L768 585.6L993 436.6L1270.5 436.6L1270.5 801" fill="none" stroke="#0c2b3c" stroke-width="1.1" stroke-linejoin="miter"/>
<path d="M527.4 635.3A283.0 283.0 0 0 0 1028.4 436.600" fill="none" stroke="#0c2b3c" stroke-width="1.3"/>
<path d="M578.2 635V682.8M628.2 635V712.1M677.8 635V729.3M747.5 724V737.5M778 579V735.6M828.2 545.7V725.1M878.3 512.5V704.4M927.3 480V671.3M977.7 446.7V616.1" stroke="#0c2b3c" stroke-width="1.1" fill="none"/>
<rect x="494.4" y="608.0" width="9.700000000000022" height="115.79999999999995" fill="#1bbfc7" stroke="#0c2b3c" stroke-width="1"/>
<rect x="493.2" y="602.5" width="11.100000000000023" height="5.5" fill="#2d8daa" stroke="#0c2b3c" stroke-width="1"/>
<rect x="748.4000000000001" y="591.1" width="8.799999999999931" height="133.69999999999993" fill="#1bbfc7" stroke="#0c2b3c" stroke-width="1"/>
<rect x="747.2" y="585.6" width="10.199999999999932" height="5.5" fill="#2d8daa" stroke="#0c2b3c" stroke-width="1"/>
<path d="M747.2 585.6V724.8M504.300 602.5V635" stroke="#0c2b3c" stroke-width="1.6"/>
<path d="M503.0 370.4V581.3M503.0 370.4H745.6M527.3 370.4V581.3M503.0 391.5H745.6M551.5 370.4V581.3M503.0 412.6H745.6M575.8 370.4V581.3M503.0 433.7H745.6M600.0 370.4V581.3M503.0 454.8H745.6M624.3 370.4V581.3M503.0 475.8H745.6M648.6 370.4V581.3M503.0 496.9H745.6M672.8 370.4V581.3M503.0 518.0H745.6M697.1 370.4V581.3M503.0 539.1H745.6M721.3 370.4V581.3M503.0 560.2H745.6M745.6 370.4V581.3M503.0 581.3H745.6" stroke="#111" stroke-width="1.1" fill="none"/>
<path d="M745.4 454.5L1028.4 436.6M745.4 454.5L527.4 635.3" stroke="#5a5a5a" stroke-width=".9" fill="none"/>
<path d="M743.9 455.9L525.9 636.700" stroke="#c9c9c9" stroke-width=".8" fill="none"/>
<path d="M508 617L546 655M508.300 667L558 617.5" stroke="#0c2b3c" stroke-width="1.2" fill="none"/>
<path d="M507.300 600V608.600" stroke="#222" stroke-width="1.8"/>
<rect x="135" y="436.800" width="24.6" height="24" fill="#139bbf" stroke="#0c1c24" stroke-width="1.4"/>
</svg>
<div class="t" style="left:185.4px;top:437.5px;font-size:16px;line-height:21px;color:#303030;transform:scaleX(1.021);">Depositi</div>
<div class="t" style="left:185.4px;top:461.7px;font-size:16px;line-height:21px;color:#303030;transform:scaleX(1.030);">Peso unità di volume 1850 kg/m³</div>
<div class="t" style="left:185.4px;top:485.7px;font-size:16px;line-height:21px;color:#303030;transform:scaleX(1.034);">Peso unità di volume saturo 2200 kg/m³</div>
<div class="t" style="left:185.4px;top:509.7px;font-size:16px;line-height:21px;color:#303030;transform:scaleX(1.034);">Angolo di resistenza a taglio 25°</div>
<div class="t" style="left:185.4px;top:533.7px;font-size:16px;line-height:21px;color:#303030;transform:scaleX(1.015);">Coesione 0.15 kg/cm²</div>
<div class="t" style="left:185.4px;top:557.7px;font-size:16px;line-height:21px;color:#303030;transform:scaleX(1.031);">Coesione non drenata 1.5 kg/cm²</div>
<div class="t" style="left:505.8px;top:344.5px;font-size:17.5px;line-height:23px;color:#303030;transform:scaleX(0.990);">(61.9,279.9)</div>
<div class="t" style="left:645.4px;top:344.5px;font-size:17.5px;line-height:23px;color:#303030;transform:scaleX(0.978);">(91.2,279.9)</div>
<div class="t" style="left:508.7px;top:583.7px;font-size:17.5px;line-height:23px;color:#303030;transform:scaleX(0.954);">(61.9,254.4)</div>
<div class="t" style="left:645.3px;top:583.7px;font-size:17.5px;line-height:23px;color:#303030;transform:scaleX(0.979);">(91.2,254.4)</div>
<div class="t" style="left:776.2px;top:337.8px;font-size:25px;line-height:32px;color:#2e2e2e;transform:scaleX(0.977);">xc=91.16 yc=269.70 Rc=34.22 Fs=1.54</div>
<div class="t" style="left:498.0px;top:577.8px;font-size:22px;line-height:29px;color:#111;">*</div>
<div class="t" style="left:751.8px;top:560.5px;font-size:22px;line-height:29px;color:#111;">*</div>
<div class="a" style="left:1423px;top:186px;width:49px;height:771px;background:#f0f0f0;"></div>
<div class="a" style="left:1472px;top:186px;width:437px;height:769px;background:#fff;"></div>
<div class="a" style="left:1472px;top:186px;width:437px;height:4px;background:#ececec;"></div>
<div class="a" style="left:1908px;top:185px;width:2px;height:771px;background:#6e6e6e;"></div>
<div class="a" style="left:1472px;top:954px;width:438px;height:2px;background:#6e6e6e;"></div>
<div class="a" style="left:1910px;top:181px;width:4px;height:783px;background:#fbfbfb;"></div>
<div class="a" style="left:1447px;top:190px;width:25px;height:124px;background:#f7f7f7;"></div>
<div class="a" style="left:1447px;top:313px;width:24px;height:2px;background:#7a7a7a;"></div>
<div class="a" style="left:1447px;top:192px;width:1px;height:122px;background:#c4c4c4;"></div>
<div class="t" style="left:1399.0px;top:220.2px;width:78.0px;height:18px;line-height:18px;font-size:13.5px;color:#2e2e2e;transform-origin:50% 50%;-webkit-text-stroke:.25px currentColor;transform:rotate(-90deg) scaleX(0.891);">PROPRIETÀ</div>
<div class="t" style="left:1393.5px;top:313.5px;width:89.0px;height:18px;line-height:18px;font-size:13.5px;color:#2e2e2e;transform-origin:50% 50%;-webkit-text-stroke:.25px currentColor;transform:rotate(-90deg) scaleX(0.933);">COORDINATE</div>
<div class="t" style="left:1385.9px;top:421.0px;width:104.3px;height:18px;line-height:18px;font-size:13.5px;color:#2e2e2e;transform-origin:50% 50%;-webkit-text-stroke:.25px currentColor;transform:rotate(-90deg) scaleX(0.959);">MAGLIA CENTRI</div>
<div class="t" style="left:1360.6px;top:558.0px;width:154.8px;height:18px;line-height:18px;font-size:13.5px;color:#2e2e2e;transform-origin:50% 50%;-webkit-text-stroke:.25px currentColor;transform:rotate(-90deg) scaleX(0.943);">OPERE DI INTERVENTO</div>
<div class="t" style="left:1410.2px;top:670.0px;width:55.5px;height:18px;line-height:18px;font-size:13.5px;color:#2e2e2e;transform-origin:50% 50%;-webkit-text-stroke:.25px currentColor;transform:rotate(-90deg) scaleX(0.973);">CARICHI</div>
<div class="t" style="left:1411.0px;top:737.5px;width:54.0px;height:18px;line-height:18px;font-size:13.5px;color:#2e2e2e;transform-origin:50% 50%;-webkit-text-stroke:.25px currentColor;transform:rotate(-90deg) scaleX(0.981);">VINCOLI</div>
<div class="t" style="left:1374.2px;top:840.5px;width:127.5px;height:18px;line-height:18px;font-size:13.5px;color:#2e2e2e;transform-origin:50% 50%;-webkit-text-stroke:.25px currentColor;transform:rotate(-90deg) scaleX(0.964);">OPZIONI DI ANALISI</div>
<div class="t" style="left:1398.6px;top:241.5px;width:120.8px;height:18px;line-height:18px;font-size:13.5px;color:#2e2e2e;transform-origin:50% 50%;-webkit-text-stroke:.25px currentColor;transform:rotate(-90deg) scaleX(0.902);">SINTESI CALCOLO</div>
<div class="a" style="left:1428px;top:271px;width:18px;height:2px;background:#7a7a7a;"></div>
<div class="a" style="left:1428px;top:370px;width:18px;height:2px;background:#7a7a7a;"></div>
<div class="a" style="left:1428px;top:487px;width:18px;height:2px;background:#7a7a7a;"></div>
<div class="a" style="left:1428px;top:645px;width:18px;height:2px;background:#7a7a7a;"></div>
<div class="a" style="left:1428px;top:712px;width:18px;height:2px;background:#7a7a7a;"></div>
<div class="a" style="left:1428px;top:778px;width:18px;height:2px;background:#7a7a7a;"></div>
<div class="a" style="left:1428px;top:915px;width:18px;height:2px;background:#7a7a7a;"></div>
<div class="a" style="left:1482px;top:209px;width:409px;height:98px;border:1px solid #dcdcdc;border-radius:2px;"></div>
<div class="a" style="left:1490px;top:201px;width:98px;height:16px;background:#fff;"></div>
<div class="t" style="left:1493.5px;top:200.0px;font-size:14.5px;line-height:19px;color:#1f1f1f;transform:scaleX(0.971);-webkit-text-stroke:.3px currentColor;">Sintesi calcolo</div>
<div class="t" style="left:1494.7px;top:232.2px;font-size:14.5px;line-height:19px;color:#1f1f1f;transform:scaleX(0.943);-webkit-text-stroke:.3px currentColor;">Superfici calcolate</div>
<div class="a" style="left:1824px;top:229px;width:56px;height:27px;background:#fff;border:1px solid #e3e3e3;border-bottom:1px solid #8c8c8c;border-radius:3px;"></div><div class="t" style="left:1829.0px;top:233.2px;font-size:14.5px;line-height:19px;color:#1f1f1f;transform:scaleX(0.952);-webkit-text-stroke:.3px currentColor;">116</div>
<div class="t" style="left:1494.7px;top:267.2px;font-size:14.5px;line-height:19px;color:#1f1f1f;transform:scaleX(0.876);-webkit-text-stroke:.3px currentColor;">SF Min, SF Max</div>
<div class="a" style="left:1760px;top:264px;width:56px;height:27px;background:#fff;border:1px solid #e3e3e3;border-bottom:1px solid #8c8c8c;border-radius:3px;"></div><div class="t" style="left:1765.0px;top:268.2px;font-size:14.5px;line-height:19px;color:#1f1f1f;transform:scaleX(0.921);-webkit-text-stroke:.3px currentColor;">1.54</div>
<div class="a" style="left:1824px;top:264px;width:56px;height:27px;background:#fff;border:1px solid #e3e3e3;border-bottom:1px solid #8c8c8c;border-radius:3px;"></div><div class="t" style="left:1829.0px;top:268.2px;font-size:14.5px;line-height:19px;color:#1f1f1f;transform:scaleX(0.937);-webkit-text-stroke:.3px currentColor;">20.00</div>
<div class="a" style="left:1482px;top:325px;width:409px;height:84px;border:1px solid #dcdcdc;border-radius:2px;"></div>
<div class="a" style="left:1490px;top:317px;width:64px;height:16px;background:#fff;"></div>
<div class="t" style="left:1493.5px;top:316.0px;font-size:14.5px;line-height:19px;color:#1f1f1f;transform:scaleX(0.952);-webkit-text-stroke:.3px currentColor;">Ricalcola</div>
<div class="t" style="left:1529.0px;top:340.7px;font-size:14.5px;line-height:19px;color:#1f1f1f;transform:scaleX(0.886);-webkit-text-stroke:.3px currentColor;">Xc</div>
<div class="t" style="left:1593.4px;top:343.2px;font-size:14.5px;line-height:19px;color:#1f1f1f;transform:scaleX(0.827);-webkit-text-stroke:.3px currentColor;">Yc</div>
<div class="t" style="left:1654.7px;top:343.2px;font-size:14.5px;line-height:19px;color:#1f1f1f;transform:scaleX(0.846);-webkit-text-stroke:.3px currentColor;">Rc</div>
<div class="t" style="left:1712.6px;top:343.2px;font-size:14.5px;line-height:19px;color:#1f1f1f;transform:scaleX(0.745);-webkit-text-stroke:.3px currentColor;">Fs</div>
<div class="a" style="left:1530px;top:364px;width:52px;height:27px;background:#fff;border:1px solid #e3e3e3;border-bottom:1px solid #8c8c8c;border-radius:3px;overflow:hidden;"></div>
<div class="a" style="left:1531px;top:365px;width:49px;height:24px;overflow:hidden;"><div class="t" style="left:2.5px;top:2.3px;font-size:14.5px;line-height:19px;color:#1f1f1f;transform:scaleX(0.906);">91.1633</div></div>
<div class="a" style="left:1591px;top:364px;width:52px;height:27px;background:#fff;border:1px solid #e3e3e3;border-bottom:1px solid #8c8c8c;border-radius:3px;overflow:hidden;"></div>
<div class="a" style="left:1592px;top:365px;width:49px;height:24px;overflow:hidden;"><div class="t" style="left:2.5px;top:2.3px;font-size:14.5px;line-height:19px;color:#1f1f1f;transform:scaleX(0.906);">269.698</div></div>
<div class="a" style="left:1653px;top:364px;width:52px;height:27px;background:#fff;border:1px solid #e3e3e3;border-bottom:1px solid #8c8c8c;border-radius:3px;overflow:hidden;"></div>
<div class="a" style="left:1654px;top:365px;width:49px;height:24px;overflow:hidden;"><div class="t" style="left:2.5px;top:2.3px;font-size:14.5px;line-height:19px;color:#1f1f1f;transform:scaleX(0.906);">34.2239</div></div>
<div class="a" style="left:1714px;top:364px;width:52px;height:27px;background:#fff;border:1px solid #e3e3e3;border-bottom:1px solid #8c8c8c;border-radius:3px;overflow:hidden;"></div>
<div class="a" style="left:1715px;top:365px;width:49px;height:24px;overflow:hidden;"><div class="t" style="left:2.5px;top:2.3px;font-size:14.5px;line-height:19px;color:#1f1f1f;transform:scaleX(0.906);">1.54374</div></div>
<svg class="a" style="left:1781px;top:366px" width="20" height="20"><circle cx="10" cy="10" r="8.600" fill="#5cb697" stroke="#4a9f83" stroke-width=".8"/><path d="M5.500 9a4.600 4.600 0 0 1 8-2.500M14.500 11a4.600 4.600 0 0 1-8 2.500" stroke="#dff3ea" stroke-width="1.600" fill="none"/><path d="M14.600 3.800v3.400h-3.400zM5.400 16.200v-3.400h3.400z" fill="#dff3ea"/></svg>
<div class="a" style="left:1482px;top:428px;width:409px;height:204px;border:1px solid #dcdcdc;border-radius:2px;"></div>
<div class="a" style="left:1490px;top:420px;width:178px;height:16px;background:#fff;"></div>
<div class="t" style="left:1493.5px;top:419.0px;font-size:14.5px;line-height:19px;color:#1f1f1f;transform:scaleX(0.995);-webkit-text-stroke:.3px currentColor;">Intervalli di visualizzazione</div>
<div class="a" style="left:1496px;top:447.8px;width:16px;height:16px;border-radius:50%;background:#fff;border:4.5px solid #0a5fb4;"></div>
<div class="t" style="left:1516.6px;top:446.7px;font-size:14.5px;line-height:19px;color:#1f1f1f;-webkit-text-stroke:.3px currentColor;">Superficie a fattore minimo</div>
<div class="a" style="left:1496px;top:477.5px;width:16px;height:16px;border-radius:50%;background:#f3f3f3;border:1px solid #7f7f7f;"></div>
<div class="t" style="left:1516.6px;top:476.7px;font-size:14.5px;line-height:19px;color:#1f1f1f;transform:scaleX(0.986);-webkit-text-stroke:.3px currentColor;">Superfici calcolate</div>
<div class="a" style="left:1496px;top:507.79999999999995px;width:16px;height:16px;border-radius:50%;background:#f3f3f3;border:1px solid #7f7f7f;"></div>
<div class="t" style="left:1516.6px;top:506.7px;font-size:14.5px;line-height:19px;color:#1f1f1f;transform:scaleX(0.972);-webkit-text-stroke:.3px currentColor;">Superfici da visualizzare</div>
<div class="a" style="left:1764px;top:504px;width:119px;height:26px;background:#fff;border:1px solid #d5d5d5;border-radius:3px;"></div>
<svg class="a" style="left:1865px;top:513px" width="12" height="8"><path d="M1 1.500l5 5 5-5" stroke="#555" stroke-width="1.3" fill="none"/></svg>
<div class="a" style="left:1496px;top:538.5px;width:16px;height:16px;border-radius:50%;background:#f3f3f3;border:1px solid #7f7f7f;"></div>
<div class="t" style="left:1518.0px;top:537.2px;font-size:14.5px;line-height:19px;color:#e23b3b;transform:scaleX(0.880);-webkit-text-stroke:.3px currentColor;">1.54 - 4.79</div>
<div class="a" style="left:1650.7px;top:538.5px;width:16px;height:16px;border-radius:50%;background:#f3f3f3;border:1px solid #7f7f7f;"></div>
<div class="t" style="left:1672.4px;top:537.2px;font-size:14.5px;line-height:19px;color:#3535b5;transform:scaleX(0.894);-webkit-text-stroke:.3px currentColor;">4.79 - 8.03</div>
<div class="a" style="left:1496px;top:568.3px;width:16px;height:16px;border-radius:50%;background:#f3f3f3;border:1px solid #7f7f7f;"></div>
<div class="t" style="left:1518.0px;top:567.0px;font-size:14.5px;line-height:19px;color:#e040e0;transform:scaleX(0.891);-webkit-text-stroke:.3px currentColor;">8.03 - 11.27</div>
<div class="a" style="left:1650.7px;top:568.3px;width:16px;height:16px;border-radius:50%;background:#f3f3f3;border:1px solid #7f7f7f;"></div>
<div class="t" style="left:1672.4px;top:567.0px;font-size:14.5px;line-height:19px;color:#4be04b;transform:scaleX(0.901);-webkit-text-stroke:.3px currentColor;">11.27 - 14.51</div>
<div class="a" style="left:1496px;top:598px;width:16px;height:16px;border-radius:50%;background:#f3f3f3;border:1px solid #7f7f7f;"></div>
<div class="t" style="left:1518.0px;top:596.7px;font-size:14.5px;line-height:19px;color:#23237a;transform:scaleX(0.901);-webkit-text-stroke:.3px currentColor;">14.51 - 17.76</div>
<div class="a" style="left:1650.7px;top:598px;width:16px;height:16px;border-radius:50%;background:#f3f3f3;border:1px solid #7f7f7f;"></div>
<div class="t" style="left:1672.4px;top:596.7px;font-size:14.5px;line-height:19px;color:#80803a;transform:scaleX(0.901);-webkit-text-stroke:.3px currentColor;">17.76 - 21.00</div>
<div class="a" style="left:1482px;top:650px;width:409px;height:118px;border:1px solid #dcdcdc;border-radius:2px;"></div>
<div class="a" style="left:1490px;top:642px;width:70px;height:16px;background:#fff;"></div>
<div class="t" style="left:1493.5px;top:641.0px;font-size:14.5px;line-height:19px;color:#1f1f1f;transform:scaleX(0.954);-webkit-text-stroke:.3px currentColor;">Visualizza</div>
<div class="a" style="left:1492px;top:670px;width:182px;height:26px;background:#fff;border:1px solid #cfcfcf;border-radius:3px;"></div>
<div class="t" style="left:1497.5px;top:674.2px;font-size:14.5px;line-height:19px;color:#1f1f1f;transform:scaleX(1.022);-webkit-text-stroke:.3px currentColor;">Maglia centri</div>
<svg class="a" style="left:1657px;top:679.5px" width="12" height="8"><path d="M1 1.500l5 5 5-5" stroke="#555" stroke-width="1.3" fill="none"/></svg>
<div class="a" style="left:1759px;top:670px;width:56px;height:27px;background:#fff;border:1px solid #e3e3e3;border-bottom:1px solid #8c8c8c;border-radius:3px;"></div>
<svg class="a" style="left:1490px;top:706px" width="16" height="16"><rect width="16" height="16" rx="3.500" fill="#0a5fb4"/><path d="M4 8.200l2.800 2.800L12 5.500" stroke="#fff" stroke-width="1.3" fill="none"/></svg>
<div class="t" style="left:1510.0px;top:705.7px;font-size:14.5px;line-height:19px;color:#1f1f1f;transform:scaleX(0.994);-webkit-text-stroke:.3px currentColor;">Scelta automatica colori intervalli di visualizzazione</div>
<div class="t" style="left:1495.0px;top:729.7px;font-size:14.5px;line-height:19px;color:#8a8a8a;transform:scaleX(0.962);">Scelta colori intervalli</div>
<svg class="a" style="left:1482px;top:780px" width="16" height="16"><rect width="16" height="16" rx="3.500" fill="#0a5fb4"/><path d="M4 8.200l2.800 2.800L12 5.500" stroke="#fff" stroke-width="1.3" fill="none"/></svg>
<div class="t" style="left:1502.6px;top:779.7px;font-size:14.5px;line-height:19px;color:#1f1f1f;transform:scaleX(0.986);-webkit-text-stroke:.3px currentColor;">Sintetizzare la stampa delle superfici</div>
<svg class="a" style="left:1670px;top:254px" width="14" height="21"><path d="M1 1v15.500l3.600-3.300 2.700 6 2.200-1-2.700-5.800H12z" fill="#fff" stroke="#111" stroke-width="1"/></svg>
<div class="a" style="left:0px;top:958px;width:1914px;height:6px;background:#f4f4f4;"></div>
<div class="a" style="left:0px;top:964px;width:777px;height:24px;background:#f1f1f1;"></div>
<div class="a" style="left:777px;top:964px;width:1137px;height:24px;background:#1d4b97;"></div>
<div class="a" style="left:908px;top:964px;width:154px;height:24px;background:#173c7c;"></div>
<div class="a" style="left:0px;top:964px;width:3px;height:24px;background:#1d4b97;"></div>
<div class="a" style="left:135px;top:964px;width:10px;height:24px;background:#1d4b97;"></div>
<div class="t" style="left:15.5px;top:968.2px;font-size:14.5px;line-height:19px;color:#222;transform:scaleX(0.915);-webkit-text-stroke:.3px currentColor;">171.00  300.14</div>
<div class="t" style="left:148.0px;top:968.2px;font-size:14.5px;line-height:19px;color:#222;transform:scaleX(0.930);-webkit-text-stroke:.3px currentColor;">xc=91.16 yc=269.7 Rc=34.22 F=1.5437</div>
<div class="t" style="left:806.0px;top:968.0px;font-size:14.5px;line-height:19px;color:#ffffff;transform:scaleX(0.886);">Snap</div>
<div class="t" style="left:867.0px;top:968.0px;font-size:14.5px;line-height:19px;color:#ffffff;transform:scaleX(0.883);">Griglia</div>
<div class="t" style="left:912.0px;top:968.0px;font-size:14.5px;line-height:19px;color:#ffffff;transform:scaleX(0.921);">Visual conci</div>
<div class="t" style="left:991.0px;top:968.0px;font-size:14.5px;line-height:19px;color:#ffffff;transform:scaleX(0.887);">Visual raggi</div>
<div class="t" style="left:1066.0px;top:968.0px;font-size:14.5px;line-height:19px;color:#ffffff;transform:scaleX(0.940);">Nr. conci</div>
<div class="t" style="left:1127.0px;top:968.0px;font-size:14.5px;line-height:19px;color:#ffffff;transform:scaleX(0.907);">Linee guida</div>
<div class="t" style="left:1227.0px;top:968.0px;font-size:14.5px;line-height:19px;color:#ffffff;transform:scaleX(0.926);">Lingua:IT</div>
<div class="t" style="left:1449.0px;top:968.0px;font-size:14.5px;line-height:19px;color:#ffffff;transform:scaleX(0.913);">GEOSTRU  SLOPE</div>
<div class="t" style="left:1820.0px;top:968.0px;font-size:14.5px;line-height:19px;color:#ffffff;transform:scaleX(0.879);">Unità di misura</div>
<svg class="a" style="left:782px;top:968px" width="22" height="18"><path d="M1 17v-5h7l3-4h8v9z" fill="#e9a52b"/><path d="M3 3l6 8-4-1z" fill="#fff"/><circle cx="5" cy="4" r="1.800" fill="#d2322d"/></svg>
<svg class="a" style="left:844px;top:968px" width="22" height="18"><path d="M1 17v-4h7l4-6h7v10z" fill="#e9a52b"/><path d="M13 2h6M16 2v3" stroke="#fff" stroke-width="1.200"/></svg>
<svg class="a" style="left:1203px;top:968px" width="22" height="18"><circle cx="8" cy="6" r="4.500" fill="#d9dde3"/><path d="M4 6h8M8 1.500v9" stroke="#8a94a2" stroke-width="1"/><path d="M5 17l3-7 3 7" stroke="#c9ced6" stroke-width="1.400" fill="none"/><path d="M14 5h6" stroke="#9fb3d6" stroke-width="1.500"/></svg>
<svg class="a" style="left:1426px;top:968px" width="18" height="18"><circle cx="9" cy="9" r="7.500" fill="none" stroke="#fff" stroke-width="1.500"/><ellipse cx="9" cy="9" rx="3.400" ry="7.500" fill="none" stroke="#fff" stroke-width="1.300"/><path d="M1.500 9h15M2.500 5.200h13M2.500 12.800h13" stroke="#fff" stroke-width="1.200"/></svg>
<svg class="a" style="left:1795px;top:967px" width="22" height="20"><path d="M3 17L15 5l3 3L6 19z" fill="#e3c53a"/><path d="M15 5l2-2 3 3-2 2z" fill="#58b05a"/><path d="M3 3h6M6 1v5" stroke="#d7dbe6" stroke-width="1.200"/><path d="M3 17l1.500 2.500L6 19z" fill="#fff"/></svg>
<div class="a" style="left:1574px;top:966px;width:30px;height:22px;background:#3c64a6;"></div>
<div class="a" style="left:1604px;top:966px;width:34px;height:22px;background:#3b62a3;"></div>
<div class="a" style="left:1638px;top:966px;width:26px;height:22px;background:#466cab;"></div>
<div class="a" style="left:1668px;top:966px;width:40px;height:22px;background:#5c7fb8;"></div>
<div class="a" style="left:1708px;top:966px;width:44px;height:22px;background:#6485bc;"></div>
<div class="a" style="left:1752px;top:966px;width:38px;height:22px;background:#5a7db6;"></div>
</body></html>
